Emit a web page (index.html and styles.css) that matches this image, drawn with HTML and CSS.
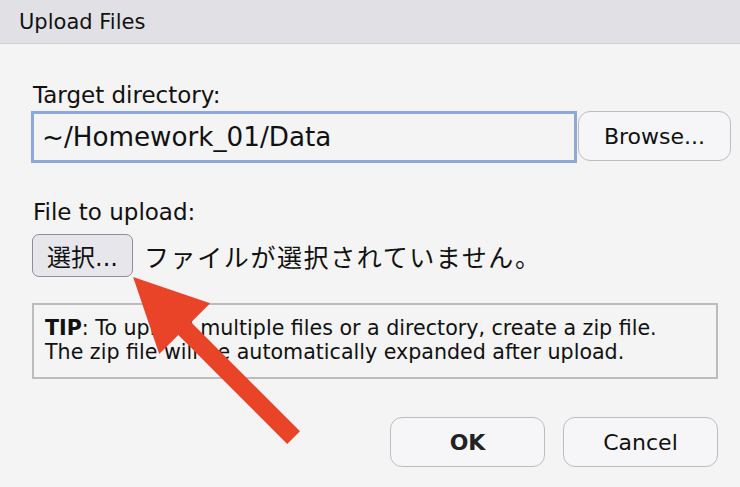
FILE: index.html
```html
<!DOCTYPE html>
<html lang="ja">
<head>
<meta charset="utf-8">
<title>Upload Files</title>
<link rel="stylesheet" href="styles.css">
</head>
<body>
<div class="dialog">
  <div class="titlebar">Upload Files</div>
  <div class="content">
    <div class="label">Target directory:</div>
    <div class="dir-row">
      <div class="dir-input">~/Homework_01/Data</div>
      <button class="btn browse">Browse...</button>
    </div>
    <div class="label label-file">File to upload:</div>
    <div class="file-row">
      <button class="file-btn">選択...</button>
      <span class="file-status">ファイルが選択されていません。</span>
    </div>
    <div class="tip">
      <div class="tip-line"><b>TIP</b>: To upload multiple files or a directory, create a zip file.</div>
      <div class="tip-line">The zip file will be automatically expanded after upload.</div>
    </div>
    <div class="footer">
      <button class="btn footer-btn ok">OK</button>
      <button class="btn footer-btn">Cancel</button>
    </div>
  </div>
  <svg class="arrow" width="740" height="487" viewBox="0 0 740 487" xmlns="http://www.w3.org/2000/svg">
    <polygon points="133.1,277 210.2,303.2 191.1,322.3 300,431.2 287.2,443.9 178.3,335 159.2,354.1" fill="#e94428"/>
  </svg>
</div>
</body>
</html>
```
FILE: styles.css
```css
html, body {
  margin: 0;
  padding: 0;
}
body {
  background: #f3f4f3;
  font-family: "DejaVu Sans", "Noto Sans CJK JP", sans-serif;
  color: #111;
}
.dialog {
  position: relative;
  width: 740px;
  height: 487px;
  overflow: hidden;
}
.titlebar {
  height: 43px;
  line-height: 44px;
  background: #e1e1e5;
  border-bottom: 1px solid #cfcfd3;
  padding-left: 19px;
  font-size: 21px;
  color: #111;
}
.content {
  padding: 38px 22px 0 31px;
}
.label {
  font-size: 23px;
  line-height: 27px;
  height: 27px;
  padding-left: 2px;
}
.dir-row {
  display: flex;
  align-items: flex-start;
  gap: 1px;
  margin-top: 2px;
  margin-right: -13px;
}
.dir-input {
  box-sizing: border-box;
  width: 546px;
  height: 52px;
  border: 3px solid #8ea8d7;
  padding-left: 8px;
  font-size: 26.2px;
  display: flex;
  align-items: center;
  background: #f3f4f3;
}
.btn {
  box-sizing: border-box;
  font-family: "DejaVu Sans", sans-serif;
  font-size: 22px;
  color: #111;
  background: #f6f6f8;
  border: 1.5px solid #bdbdbd;
  border-radius: 12px;
  padding: 0;
  margin: 0;
}
.browse {
  width: 153px;
  height: 50px;
}
.label-file {
  margin-top: 36px;
}
.file-row {
  display: flex;
  align-items: center;
  margin-top: 8px;
  margin-left: 1px;
}
.file-btn {
  box-sizing: border-box;
  width: 101px;
  height: 43px;
  margin: 0;
  padding: 0;
  background: #e7e7eb;
  border: 1.5px solid #8e8e9a;
  border-radius: 7px;
  font-family: "DejaVu Sans", "Noto Sans CJK JP", sans-serif;
  font-size: 24px;
  color: #111;
}
.file-status {
  margin-left: 11px;
  font-family: "Noto Sans CJK JP", sans-serif;
  font-size: 25px;
  letter-spacing: 1.6px;
  color: #111;
}
.tip {
  box-sizing: border-box;
  margin-top: 26px;
  margin-left: 1px;
  width: 686px;
  height: 76px;
  border: 2px solid #bcbcbc;
  padding: 11px 10px 0 11px;
  font-size: 20.6px;
  white-space: nowrap;
}
.tip-line {
  line-height: 24px;
  height: 24px;
}
.footer {
  display: flex;
  justify-content: flex-end;
  gap: 18px;
  margin-top: 38px;
}
.footer-btn {
  width: 155px;
  height: 50px;
}
.ok {
  font-weight: bold;
  color: #222;
}
.arrow {
  position: absolute;
  left: 0;
  top: 0;
  pointer-events: none;
}
```
